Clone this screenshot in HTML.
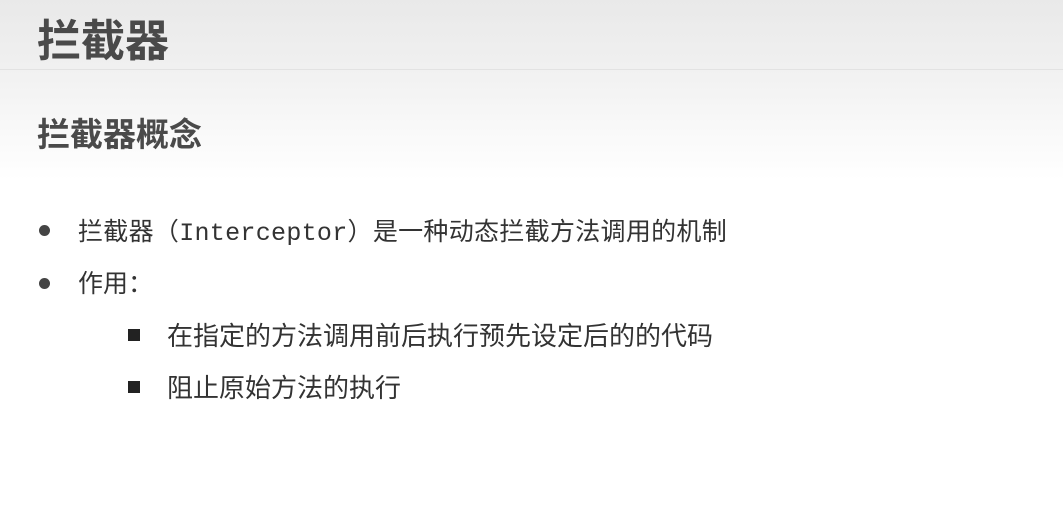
<!DOCTYPE html><html><head><meta charset="utf-8"><style>
body{margin:0;width:1063px;height:529px;overflow:hidden;background:#fff;font-family:"Liberation Sans","Noto Sans CJK SC",sans-serif;color:#333;position:relative}
.hdr{position:absolute;left:0;top:0;width:1063px;height:69px;background:linear-gradient(#e9e9e9,#f0f0f0);border-bottom:1px solid #e2e2e2}
.sub{position:absolute;left:0;top:70px;width:1063px;height:110px;background:linear-gradient(#f1f1f1,#fff)}
.t{position:absolute;white-space:nowrap}
.mono{font-family:"Liberation Mono",monospace}
.dot{position:absolute;width:11px;height:11px;border-radius:50%;background:#444}
.sq{position:absolute;width:12px;height:12px;background:#222}
</style></head><body>
<div class="hdr"></div><div class="sub"></div>
<div class="t" style="left:37px;top:5px;font-size:44px;font-weight:bold;color:#4a4a4a">拦截器</div>
<div class="t" style="left:37px;top:108px;font-size:33px;font-weight:bold;color:#4a4a4a">拦截器概念</div>
<div class="dot" style="left:39px;top:225px"></div>
<div class="t" style="left:78px;top:212px;font-size:25px;letter-spacing:0.3px">拦截器（<span class="mono">Interceptor</span>）是一种动态拦截方法调用的机制</div>
<div class="dot" style="left:39px;top:278px"></div>
<div class="t" style="left:78px;top:264px;font-size:25px">作用：</div>
<div class="sq" style="left:128px;top:329px"></div>
<div class="t" style="left:167px;top:316px;font-size:26px">在指定的方法调用前后执行预先设定后的的代码</div>
<div class="sq" style="left:128px;top:381px"></div>
<div class="t" style="left:167px;top:368px;font-size:26px">阻止原始方法的执行</div>
</body></html>
